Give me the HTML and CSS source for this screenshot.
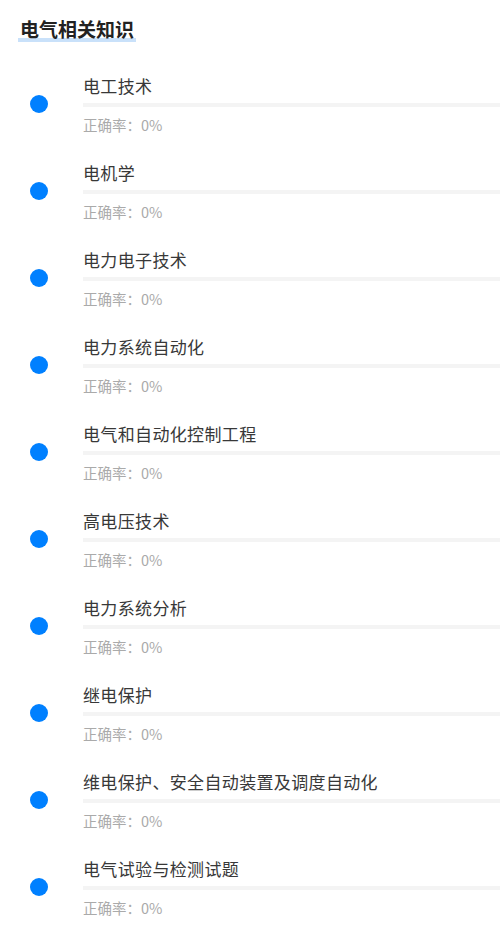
FILE: index.html
```html
<!DOCTYPE html>
<html lang="zh-CN">
<head>
    <meta charset="UTF-8">
    <meta name="viewport" content="width=device-width, initial-scale=1.0">
    <title>电气相关知识</title>
    <link rel="stylesheet" href="styles.css">
</head>
<body>

    <header class="page-title">
        <h1><span>电气相关知识</span></h1>
    </header>

    <ul class="topic-list">
        <li class="topic">
            <span class="dot"></span>
            <div class="topic-body">
                <p class="topic-name">电工技术</p>
                <div class="progress"><div class="progress-fill" style="width: 0%"></div></div>
                <p class="topic-rate">正确率：0%</p>
            </div>
        </li>
        <li class="topic">
            <span class="dot"></span>
            <div class="topic-body">
                <p class="topic-name">电机学</p>
                <div class="progress"><div class="progress-fill" style="width: 0%"></div></div>
                <p class="topic-rate">正确率：0%</p>
            </div>
        </li>
        <li class="topic">
            <span class="dot"></span>
            <div class="topic-body">
                <p class="topic-name">电力电子技术</p>
                <div class="progress"><div class="progress-fill" style="width: 0%"></div></div>
                <p class="topic-rate">正确率：0%</p>
            </div>
        </li>
        <li class="topic">
            <span class="dot"></span>
            <div class="topic-body">
                <p class="topic-name">电力系统自动化</p>
                <div class="progress"><div class="progress-fill" style="width: 0%"></div></div>
                <p class="topic-rate">正确率：0%</p>
            </div>
        </li>
        <li class="topic">
            <span class="dot"></span>
            <div class="topic-body">
                <p class="topic-name">电气和自动化控制工程</p>
                <div class="progress"><div class="progress-fill" style="width: 0%"></div></div>
                <p class="topic-rate">正确率：0%</p>
            </div>
        </li>
        <li class="topic">
            <span class="dot"></span>
            <div class="topic-body">
                <p class="topic-name">高电压技术</p>
                <div class="progress"><div class="progress-fill" style="width: 0%"></div></div>
                <p class="topic-rate">正确率：0%</p>
            </div>
        </li>
        <li class="topic">
            <span class="dot"></span>
            <div class="topic-body">
                <p class="topic-name">电力系统分析</p>
                <div class="progress"><div class="progress-fill" style="width: 0%"></div></div>
                <p class="topic-rate">正确率：0%</p>
            </div>
        </li>
        <li class="topic">
            <span class="dot"></span>
            <div class="topic-body">
                <p class="topic-name">继电保护</p>
                <div class="progress"><div class="progress-fill" style="width: 0%"></div></div>
                <p class="topic-rate">正确率：0%</p>
            </div>
        </li>
        <li class="topic">
            <span class="dot"></span>
            <div class="topic-body">
                <p class="topic-name">维电保护、安全自动装置及调度自动化</p>
                <div class="progress"><div class="progress-fill" style="width: 0%"></div></div>
                <p class="topic-rate">正确率：0%</p>
            </div>
        </li>
        <li class="topic">
            <span class="dot"></span>
            <div class="topic-body">
                <p class="topic-name">电气试验与检测试题</p>
                <div class="progress"><div class="progress-fill" style="width: 0%"></div></div>
                <p class="topic-rate">正确率：0%</p>
            </div>
        </li>
    </ul>

</body>
</html>
```

FILE: styles.css
```css
body {
    font-family: "Noto Sans CJK SC", "Noto Sans", sans-serif;
    margin: 0;
    padding: 0;
    background-color: #ffffff;
    color: #333333;
    overflow-x: hidden;
}
.page-title {
    padding: 17px 0 0 18px;
}
.page-title h1 {
    margin: 0;
    font-size: 19px;
    line-height: 24px;
    font-weight: bold;
    color: #222222;
}
.page-title h1 span {
    display: inline-block;
    padding: 0 2px 2px;
    background-image: linear-gradient(#c9e1fa, #c9e1fa);
    background-repeat: no-repeat;
    background-size: 100% 4px;
    background-position: 0 21px;
}
.topic-list {
    list-style: none;
    margin: 18px 0 0 0;
    padding: 0;
}
.topic {
    display: flex;
    align-items: center;
    padding: 13px 0;
}
.dot {
    flex: none;
    width: 18px;
    height: 18px;
    margin: 0 35px 0 30px;
    border-radius: 50%;
    background-color: #0080ff;
    position: relative;
    top: -1px;
}
.topic-body {
    flex: 1;
}
.topic-name {
    margin: 0;
    font-size: 17px;
    line-height: 24px;
    letter-spacing: 0.35px;
    color: #383838;
}
.progress {
    margin-top: 5px;
    height: 4px;
    background-color: #f4f4f4;
}
.progress-fill {
    height: 100%;
    background-color: #0080ff;
}
.topic-rate {
    margin: 8px 0 0 0;
    font-size: 14.5px;
    line-height: 20px;
    color: #aaaaaa;
}
```
